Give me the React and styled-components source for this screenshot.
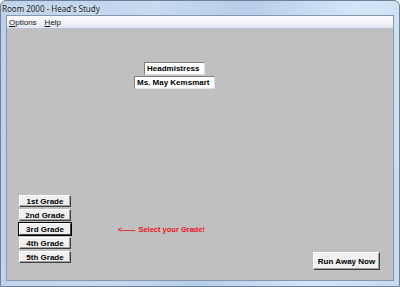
import React from "react";
import styled, { createGlobalStyle } from "styled-components";

const Global = createGlobalStyle`
  html, body {
    margin: 0;
    padding: 0;
    background: #ffffff;
  }
`;

const Window = styled.div`
  width: 400px;
  height: 287px;
  display: flex;
  flex-direction: column;
  box-sizing: border-box;
  border: 1px solid #6f8197;
  border-radius: 6px 6px 0 0;
  background: linear-gradient(100deg, #bcd2ea 0%, #c6daf0 35%, #b5cfea 55%, #d3e6f8 80%, #c8dcef 100%);
  overflow: hidden;
`;

const TitleBar = styled.div`
  height: 14px;
  display: flex;
  align-items: center;
  padding-left: 1px;
  font-family: "Noto Sans", "DejaVu Sans", sans-serif;
  font-size: 8px;
  color: #1e1e1e;
  text-shadow: 0 0 6px rgba(255, 255, 255, 0.9);
  white-space: nowrap;
`;

const Frame = styled.div`
  flex: 1;
  display: flex;
  flex-direction: column;
  margin: 0 5px 5px 5px;
  border: 1px solid #8597ab;
  background: #c0c0c0;
`;

const MenuBar = styled.div`
  height: 12px;
  display: flex;
  align-items: center;
  gap: 8px;
  padding-left: 2px;
  background: linear-gradient(#fdfdfe 0%, #f2f4f9 55%, #e2e7f2 100%);
  border-bottom: 1px solid #b9c2d2;
  font-family: "Liberation Sans", Arial, sans-serif;
  font-size: 8px;
  color: #111;
`;

const MenuItem = styled.span`
  &::first-letter {
    text-decoration: underline;
  }
`;

const Client = styled.div`
  flex: 1;
  display: flex;
  flex-direction: column;
  background: #c0c0c0;
  font-family: "Liberation Sans", Arial, sans-serif;
  font-weight: bold;
  font-size: 8px;
  color: #000;
  white-space: nowrap;
`;

const NameBlock = styled.div`
  margin: 33px 0 0 127px;
  width: 81px;
  display: flex;
  flex-direction: column;
  align-items: center;
  gap: 1px;
`;

const Label = styled.div`
  box-sizing: border-box;
  width: ${(p) => p.$w}px;
  height: 13px;
  display: flex;
  align-items: center;
  padding-left: 2px;
  background: #ffffff;
  border: 1px solid #808080;
  border-right-color: #e0e0e0;
  border-bottom-color: #e0e0e0;
`;

const BottomRow = styled.div`
  margin-top: auto;
  display: flex;
  align-items: flex-end;
  padding: 0 13px 10px 12px;
`;

const GradeList = styled.div`
  display: flex;
  flex-direction: column;
  gap: 2px;
  margin-bottom: 7px;
`;

const Button = styled.button`
  box-sizing: border-box;
  width: ${(p) => p.$w || 52}px;
  height: ${(p) => p.$h || 12}px;
  padding: 0;
  display: flex;
  align-items: center;
  justify-content: center;
  font: inherit;
  color: #000;
  background: #f0f0f0;
  border: 1px solid;
  border-color: #ffffff #404040 #404040 #ffffff;
  box-shadow: ${(p) => (p.$focus ? "0 0 0 1px #000" : "inset -1px -1px 0 #a0a0a0")};
  cursor: pointer;
`;

const Hint = styled.div`
  margin: 0 0 36px 47px;
  color: #e8141c;
  font-size: 7.5px;
  display: flex;
  align-items: center;
  gap: 4px;
`;

const Arrow = styled.span`
  letter-spacing: -1px;
`;

const RunButton = styled(Button)`
  margin-left: auto;
`;

const grades = ["1st Grade", "2nd Grade", "3rd Grade", "4th Grade", "5th Grade"];

export default function App() {
  return (
    <>
      <Global />
      <Window>
        <TitleBar>Room 2000 - Head's Study</TitleBar>
        <Frame>
          <MenuBar>
            <MenuItem>Options</MenuItem>
            <MenuItem>Help</MenuItem>
          </MenuBar>
          <Client>
            <NameBlock>
              <Label $w={61}>Headmistress</Label>
              <Label $w={81}>Ms. May Kemsmart</Label>
            </NameBlock>
            <BottomRow>
              <GradeList>
                {grades.map((g) => (
                  <Button key={g} $focus={g === "3rd Grade"}>
                    {g}
                  </Button>
                ))}
              </GradeList>
              <Hint>
                <Arrow>&lt;——</Arrow>
                <span>Select your Grade!</span>
              </Hint>
              <RunButton $w={67} $h={18}>
                Run Away Now
              </RunButton>
            </BottomRow>
          </Client>
        </Frame>
      </Window>
    </>
  );
}
